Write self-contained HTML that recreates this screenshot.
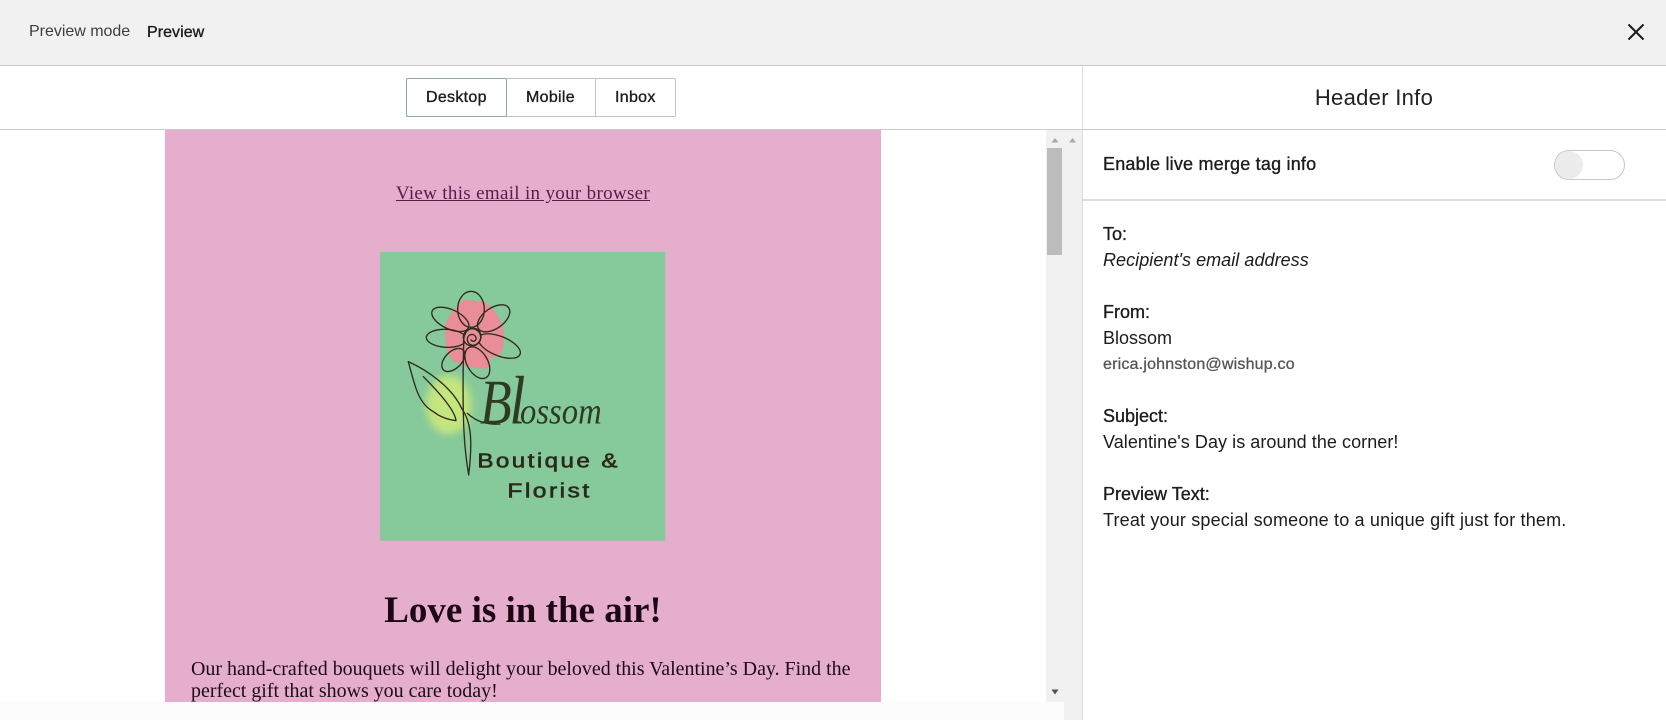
<!DOCTYPE html>
<html><head><meta charset="utf-8">
<style>
html,body{margin:0;padding:0;width:1666px;height:720px;overflow:hidden;background:#fff}
body{position:relative;font-family:"Liberation Sans",sans-serif;color:#1c1c1c}
.a{position:absolute;white-space:nowrap}
.t{position:absolute;white-space:nowrap;line-height:26px;font-size:18px;left:1103px}
.b{-webkit-text-stroke:.35px #1c1c1c}
.s{font-family:"Liberation Serif",serif}
</style></head><body>
<div class="a" style="left:0;top:0;width:1666px;height:65px;background:#f1f1f1;border-bottom:1px solid #c4c7c7"></div>
<div class="a" style="left:29px;top:21px;font-size:16px;line-height:22px;color:#3e3e3e;letter-spacing:-.02px">Preview mode</div>
<div class="a b" style="left:147px;top:22px;font-size:16px;line-height:22px;letter-spacing:.05px">Preview</div>
<svg class="a" style="left:1627px;top:23px" width="18" height="18" viewBox="0 0 18 18"><path d="M1.500 1.500L16.500 16.500M16.500 1.500L1.500 16.500" stroke="#1a1a1a" stroke-width="2" fill="none"/></svg>

<div class="a" style="left:0;top:129px;width:1666px;height:1px;background:#c8cccc"></div>
<div class="a" style="left:1082px;top:66px;width:1px;height:654px;background:#dcdedd"></div>

<div class="a" style="left:406px;top:78px;width:270px;height:39px;box-sizing:border-box;border:1px solid #bfc5c5;border-radius:2px"></div>
<div class="a" style="left:406px;top:78px;width:101px;height:39px;box-sizing:border-box;border:1px solid #8fa9a6;border-radius:2px"></div>
<div class="a" style="left:595px;top:78px;width:1px;height:39px;background:#bfc5c5"></div>
<div class="a b" style="left:426px;top:87px;font-size:16px;line-height:22px;letter-spacing:.3px">Desktop</div>
<div class="a b" style="left:526px;top:87px;font-size:16px;line-height:22px;letter-spacing:.3px">Mobile</div>
<div class="a b" style="left:615px;top:87px;font-size:16px;line-height:22px;letter-spacing:.3px">Inbox</div>

<div class="a" style="left:1083px;top:84px;width:582px;text-align:center;font-size:22px;line-height:28px;color:#222;letter-spacing:.3px">Header Info</div>

<!-- scrollbars -->
<div class="a" style="left:1046px;top:130px;width:36px;height:572px;background:#f1f1f1"></div>
<div class="a" style="left:1064px;top:702px;width:18px;height:18px;background:#f1f1f1"></div>
<div class="a" style="left:1047px;top:148px;width:15px;height:107px;background:#bcbcbc"></div>
<svg class="a" style="left:1046px;top:135px" width="36" height="10"><path d="M5.500 7.500L9 3L12.500 7.500Z" fill="#a8a8a8"/><path d="M23 7.500L26.500 3L30 7.500Z" fill="#a8a8a8"/></svg>
<svg class="a" style="left:1046px;top:687px" width="18" height="10"><path d="M5.500 2.500H12.500L9 7.500Z" fill="#505050"/></svg>

<!-- email -->
<div class="a" style="left:165px;top:130px;width:716px;height:572px;background:#e5aecd"></div>
<div class="a s" style="left:165px;top:182px;width:716px;font-size:19px;line-height:24px;color:#5b1a4c;text-align:center;letter-spacing:.32px"><span style="text-decoration:underline">View this email in your browser</span></div>

<svg class="a" style="left:370px;top:240px" width="310" height="310" viewBox="0 0 930 930">
<defs><filter id="f" x="-40%" y="-40%" width="180%" height="180%"><feGaussianBlur stdDeviation="12"/></filter></defs>
<rect x="30" y="36" width="856" height="866" fill="#86c99a"/>
<ellipse cx="236" cy="495" rx="68" ry="88" fill="#c5e57e" filter="url(#f)"/>
<path d="M280 180L340 183C365 200 385 220 400 265C405 300 400 330 390 345L360 355L360 385L315 385L250 365C232 340 225 315 225 265C228 240 240 220 280 180Z" fill="#e98d98"/>
<g fill="none" stroke="#2f2a1d" stroke-width="4" stroke-linecap="round" stroke-linejoin="round">
<ellipse cx="303" cy="208" rx="40" ry="54"/>
<ellipse cx="371" cy="235" rx="55" ry="31" transform="rotate(-35 371 235)"/>
<ellipse cx="388" cy="318" rx="67" ry="29" transform="rotate(22 388 318)"/>
<ellipse cx="322" cy="368" rx="52" ry="31" transform="rotate(60 322 368)"/>
<ellipse cx="250" cy="360" rx="42" ry="25" transform="rotate(-45 250 360)"/>
<ellipse cx="229" cy="295" rx="60" ry="27" transform="rotate(3 229 295)"/>
<ellipse cx="241" cy="238" rx="60" ry="29" transform="rotate(25 241 238)"/>
<circle cx="306" cy="292" r="26" fill="#e98d98"/>
<path d="M281 315C278 285 290 265 310 265C332 265 338 290 328 305C315 322 293 318 292 298C292 282 312 278 318 292C320 302 310 308 303 300"/>
<path d="M115 365C170 390 245 440 275 505C300 540 310 590 296 705C285 640 275 560 281 315"/>
<path d="M115 365C135 440 145 490 190 515C215 535 240 540 258 542C255 510 200 450 160 410"/>
<path d="M292 520C320 545 350 555 390 552"/>
</g>
<g>
<text x="330" y="550" font-family="Liberation Serif,serif" font-style="italic" font-size="190" textLength="95" lengthAdjust="spacingAndGlyphs" fill="#2f3a22">B</text>
<text x="418" y="550" font-family="Liberation Serif,serif" font-style="italic" font-size="205" textLength="48" lengthAdjust="spacingAndGlyphs" fill="#2f3a22">l</text>
<text x="450" y="550" font-family="Liberation Serif,serif" font-style="italic" font-size="110" textLength="245" lengthAdjust="spacingAndGlyphs" fill="#2f3a22">ossom</text>
<text x="322" y="683" font-family="Liberation Sans,sans-serif" font-size="60" letter-spacing="6" textLength="428" lengthAdjust="spacingAndGlyphs" fill="#2b2a1a" stroke="#2b2a1a" stroke-width="1.800">Boutique &amp;</text>
<text x="412" y="773" font-family="Liberation Sans,sans-serif" font-size="60" letter-spacing="6" textLength="253" lengthAdjust="spacingAndGlyphs" fill="#2b2a1a" stroke="#2b2a1a" stroke-width="1.800">Florist</text>
</g>
</svg>

<div class="a s" style="left:165px;top:589px;width:716px;text-align:center;font-size:37px;line-height:44px;font-weight:bold;color:#1d0615">Love is in the air!</div>
<div class="a s" style="left:191px;top:658px;font-size:19.950px;line-height:22px;color:#1d0a18">Our hand-crafted bouquets will delight your beloved this Valentine’s Day. Find the<br>perfect gift that shows you care today!</div>
<div class="a" style="left:0;top:702px;width:1064px;height:18px;background:#fcfcfc"></div>

<!-- right panel -->
<div class="a b" style="left:1103px;top:152px;font-size:18px;line-height:24px;letter-spacing:.2px">Enable live merge tag info</div>
<div class="a" style="left:1554px;top:150px;width:71px;height:30px;box-sizing:border-box;border:1px solid #c5c8c8;border-radius:15px;background:#fff"></div>
<div class="a" style="left:1555px;top:151px;width:28px;height:28px;border-radius:14px;background:#ececec"></div>
<div class="a" style="left:1083px;top:199px;width:583px;height:2px;background:#dcdede"></div>

<div class="t b" style="top:221px">To:</div>
<div class="t" style="top:247px;font-style:italic;letter-spacing:.05px">Recipient's email address</div>
<div class="t b" style="top:299px">From:</div>
<div class="t" style="top:325px">Blossom</div>
<div class="t" style="top:352px;font-size:16px;color:#555;-webkit-text-stroke:.3px #555;letter-spacing:.2px">erica.johnston@wishup.co</div>
<div class="t b" style="top:403px">Subject:</div>
<div class="t" style="top:429px;letter-spacing:.06px">Valentine's Day is around the corner!</div>
<div class="t b" style="top:481px">Preview Text:</div>
<div class="t" style="top:507px;letter-spacing:.17px">Treat your special someone to a unique gift just for them.</div>
</body></html>
